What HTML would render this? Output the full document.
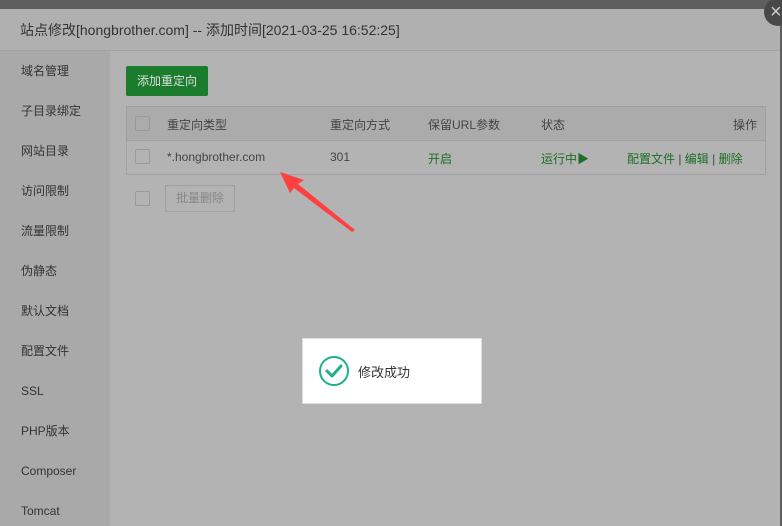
<!DOCTYPE html><html><head><meta charset="utf-8"><style>
html,body{margin:0;width:782px;height:526px;overflow:hidden}
body{background:#5e5e5e;font-family:"Liberation Sans","Noto Sans CJK SC",sans-serif;position:relative}
.dlg{position:absolute;left:0;top:9px;width:780px;height:517px;background:#b3b3b3}
.title{height:41px;border-bottom:1px solid #a3a3a3;background:#b0b0b0;font-size:14px;color:#333;line-height:43px;padding-left:20px}
.side{position:absolute;left:0;top:42px;width:110px;bottom:0;background:#a9a9a9}
.side div{height:40px;line-height:40px;padding-left:21px;font-size:12px;color:#333}
.btn{position:absolute;left:126px;top:66px;width:82px;height:30px;background:#1b7c2e;color:#ddd;font-size:12px;line-height:30px;text-align:center;border-radius:2px}
.tbl{position:absolute;left:126px;top:106px;width:638px;height:67px;border:1px solid #a0a0a0}
.hd{height:33px;border-bottom:1px solid #a0a0a0;background:#ababab}
.t{position:absolute;font-size:12px;color:#444}
.g{color:#1e6e25}
.cb{position:absolute;width:13px;height:13px;border:1px solid #999;border-radius:2px}
.toast{position:absolute;left:302px;top:338px;width:178px;height:64px;background:#fff;border:1px solid #ddd}
.close{position:absolute;left:764px;top:-2px;width:28px;height:28px;border-radius:50%;background:#484848;color:#ccc;font-size:20px;line-height:28px;text-indent:6px}
</style></head><body>
<div class="dlg">
<div class="title">站点修改[hongbrother.com] -- 添加时间[2021-03-25 16:52:25]</div>
<div class="side"><div>域名管理</div><div>子目录绑定</div><div>网站目录</div><div>访问限制</div><div>流量限制</div><div>伪静态</div><div>默认文档</div><div>配置文件</div><div>SSL</div><div>PHP版本</div><div>Composer</div><div>Tomcat</div></div>
</div>
<div class="close">×</div>
<div class="btn">添加重定向</div>
<div class="tbl"><div class="hd"></div></div>
<div class="cb" style="left:135px;top:116px"></div>
<div class="cb" style="left:135px;top:149px"></div>
<div class="cb" style="left:135px;top:191px"></div>
<div class="t" style="left:167px;top:116px">重定向类型</div>
<div class="t" style="left:330px;top:116px">重定向方式</div>
<div class="t" style="left:428px;top:116px">保留URL参数</div>
<div class="t" style="left:541px;top:116px">状态</div>
<div class="t" style="left:733px;top:116px">操作</div>
<div class="t" style="left:167px;top:150px">*.hongbrother.com</div>
<div class="t" style="left:330px;top:150px">301</div>
<div class="t g" style="left:428px;top:150px">开启</div>
<div class="t g" style="left:541px;top:150px">运行中▶</div>
<div class="t g" style="left:627px;top:150px">配置文件 <span style="color:#444">|</span> 编辑 <span style="color:#444">|</span> 删除</div>
<div style="position:absolute;left:165px;top:185px;width:68px;height:25px;border:1px solid #a0a0a0;border-radius:2px;font-size:12px;color:#888;line-height:25px;text-align:center">批量删除</div>
<svg style="position:absolute;left:0;top:0" width="782" height="526"><polygon points="280,172 304,180 298,184 355,230 352,232 294,188 290,193" fill="#ff4040"/></svg>
<div class="toast">
<svg style="position:absolute;left:15px;top:16px" width="32" height="32"><circle cx="16" cy="16" r="14" fill="none" stroke="#1fb08a" stroke-width="2"/><path d="M9 16 L14 21 L23 11" fill="none" stroke="#1fb08a" stroke-width="3" stroke-linecap="round" stroke-linejoin="round"/></svg>
<div style="position:absolute;left:55px;top:23px;font-size:13px;color:#333">修改成功</div>
</div>
</body></html>
